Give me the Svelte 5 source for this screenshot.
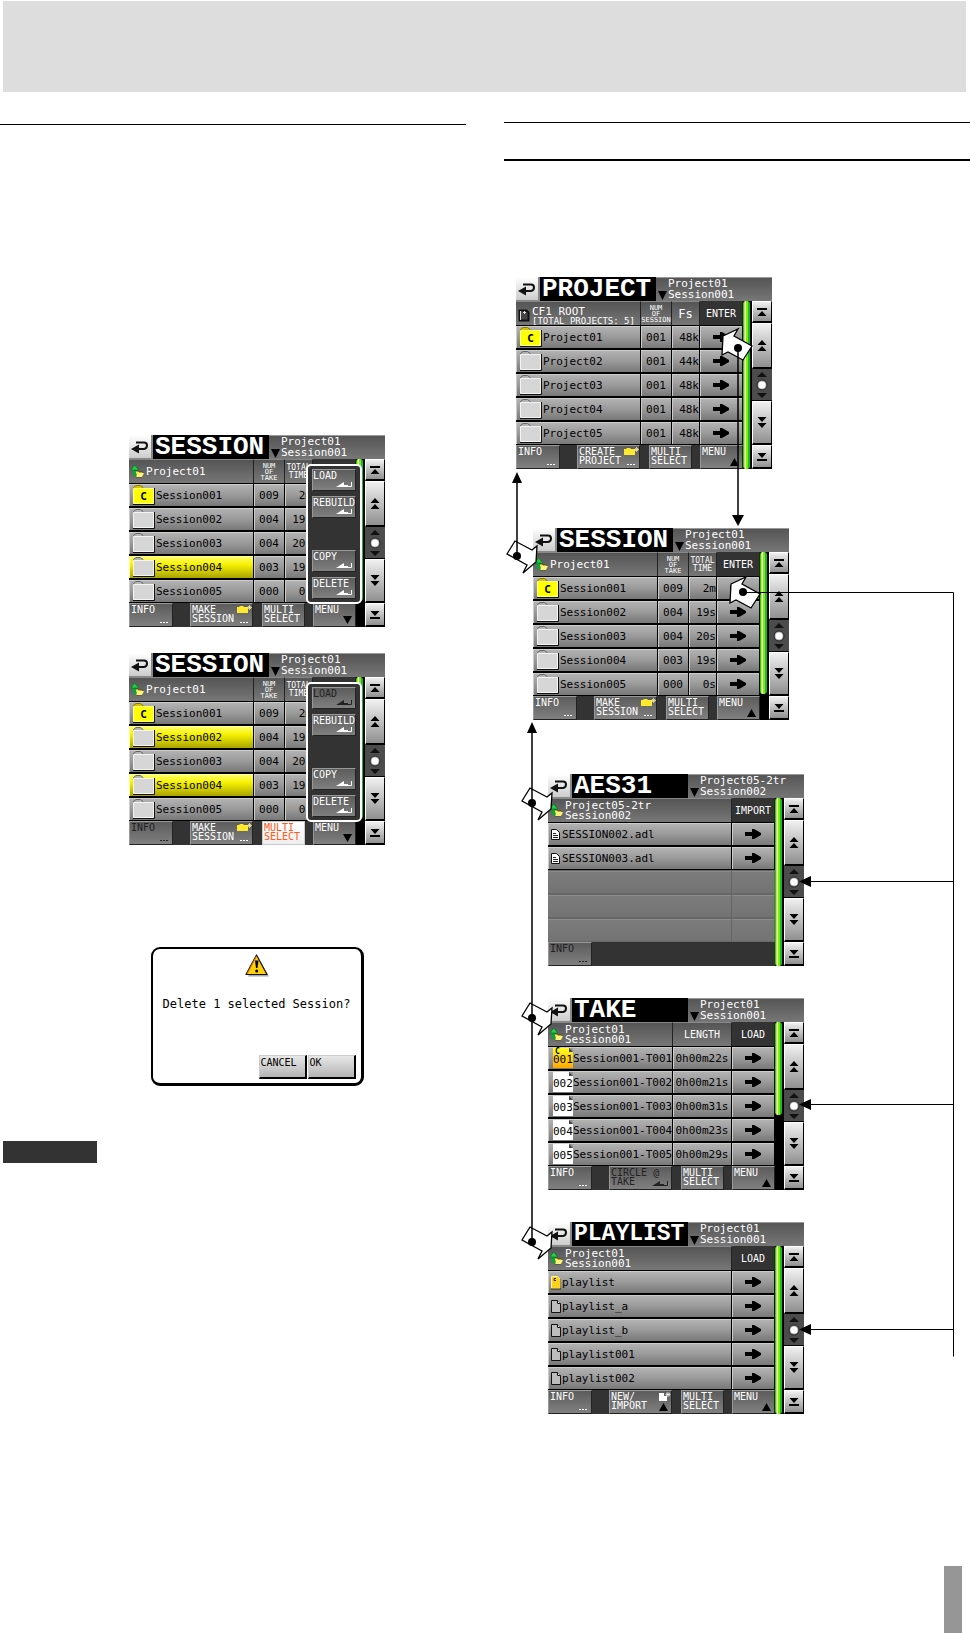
<script>
  const sessions = [
    ['Session001', '009', '2m'],
    ['Session002', '004', '19s'],
    ['Session003', '004', '20s'],
    ['Session004', '003', '19s'],
    ['Session005', '000', '0s']
  ];
  const sessionCols = [
    { label: ['NUM', 'OF', 'TAKE'], size: 'tiny', width: 31 },
    { label: ['TOTAL', 'TIME'], size: 'small', width: 28 },
    { label: ['ENTER'], dark: true, width: 43 }
  ];
  const info = { slot: 1, lines: ['INFO'], mark: 'dots' };
  const multi = { slot: 3, lines: ['MULTI', 'SELECT'] };
  const menuUp = { slot: 4, lines: ['MENU'], mark: 'up' };
  const menuDown = { slot: 4, lines: ['MENU'], mark: 'down' };
  const makeSession = { slot: 2, lines: ['MAKE', 'SESSION'], mark: 'dots', badge: 'folder' };

  function sessionRows(selected = []) {
    return sessions.map((s, i) => ({
      icon: i === 0 ? 'current' : 'folder',
      name: s[0],
      selected: selected.includes(s[0]),
      cells: [s[1], s[2], '>']
    }));
  }

  const sessionScreen = {
    title: 'SESSION', path: ['Project01', 'Session001'], crumb: ['Project01'], up: true,
    cols: sessionCols, rows: sessionRows(), bar: 142,
    actions: [info, makeSession, multi, menuUp]
  };
  const leftOne = {
    ...sessionScreen, rows: sessionRows(['Session004']),
    actions: [info, makeSession, multi, menuDown],
    menu: [['LOAD'], ['REBUILD'], null, ['COPY'], ['DELETE']]
  };
  const leftTwo = {
    ...sessionScreen, rows: sessionRows(['Session002', 'Session004']),
    actions: [{ ...info, off: true }, makeSession, { ...multi, lit: true }, menuDown],
    menu: [['LOAD', true], ['REBUILD'], null, ['COPY'], ['DELETE']]
  };
  const projectScreen = {
    title: 'PROJECT', path: ['Project01', 'Session001'], root: true,
    cols: [
      { label: ['NUM', 'OF', 'SESSION'], size: 'tiny', width: 31 },
      { label: ['Fs'], size: 'big', width: 28 },
      { label: ['ENTER'], dark: true, width: 43 }
    ],
    rows: [1, 2, 3, 4, 5].map((n) => ({
      icon: n === 1 ? 'current' : 'folder', name: 'Project0' + n,
      cells: ['001', n === 2 ? '44k' : '48k', '>']
    })),
    bar: 168,
    actions: [info, { slot: 2, lines: ['CREATE', 'PROJECT'], mark: 'dots', badge: 'folder' }, multi, menuUp]
  };
  const aesScreen = {
    title: 'AES31', path: ['Project05-2tr', 'Session002'], crumb: ['Project05-2tr', 'Session002'], up: true,
    cols: [{ label: ['IMPORT'], dark: true, width: 43 }],
    rows: [
      { icon: 'text', name: 'SESSION002.adl', cells: ['>'] },
      { icon: 'text', name: 'SESSION003.adl', cells: ['>'] },
      { empty: true, cells: [''] }, { empty: true, cells: [''] }, { empty: true, cells: [''] }
    ],
    bar: 168, actions: [{ ...info, off: true }]
  };
  const takeScreen = {
    title: 'TAKE', path: ['Project01', 'Session001'], crumb: ['Project01', 'Session001'], up: true,
    cols: [{ label: ['LENGTH'], width: 59 }, { label: ['LOAD'], dark: true, width: 43 }],
    rows: [22, 21, 31, 23, 29].map((sec, i) => ({
      icon: 'take', tag: '00' + (i + 1), current: i === 0,
      name: 'Session001-T00' + (i + 1), cells: ['0h00m' + sec + 's', '>']
    })),
    bar: 93,
    actions: [info, { slot: 2, lines: ['CIRCLE @', 'TAKE'], mark: 'enter', off: true }, multi, menuUp]
  };
  const playlistScreen = {
    title: 'PLAYLIST', narrow: true, path: ['Project01', 'Session001'], crumb: ['Project01', 'Session001'], up: true,
    cols: [{ label: ['LOAD'], dark: true, width: 43 }],
    rows: ['playlist', 'playlist_a', 'playlist_b', 'playlist001', 'playlist002'].map((name, i) => ({
      icon: i === 0 ? 'pageCurrent' : 'page', name, cells: ['>']
    })),
    bar: 168,
    actions: [info, { slot: 2, lines: ['NEW/', 'IMPORT'], mark: 'up', badge: 'page' }, multi, menuUp]
  };

  const hints = [[517, 556], [532, 803], [532, 1018], [532, 1242]];
  const targets = [[735, 344], [743, 592]];
  const dots = [...hints, [738, 348], [743, 592]];
</script>

{#snippet rowIcon(row)}
  {#if row.icon === 'current' || row.icon === 'folder'}
    {@const on = row.icon === 'current'}
    <svg class="i-folder" width="24" height="22" viewBox="0 0 24 22">
      <path d="M1.500 5V3.500L4 1.500h4.500L11 3.500V5z" fill={on ? '#d8c000' : '#b4b4b4'} stroke={on ? '#8a7a00' : '#6a6a6a'} />
      <path d="M1.500 4.500h20v15h-20z" fill={on ? '#ff0' : '#d6d6d6'} stroke={on ? '#ffff90' : '#f4f4f4'} />
      <path d="M1 20.500h21.500V4" fill="none" stroke="#111" />
      {#if on}<text x="11.500" y="16" text-anchor="middle" font-size="11" font-weight="700">C</text>{/if}
    </svg>
  {:else if row.icon === 'take'}
    <span class="tag" class:current={row.current}>
      <i></i>{#if row.current}<b>C</b>{/if}{row.tag}
    </span>
  {:else if row.icon === 'text'}
    <svg class="i-page" width="11" height="13" viewBox="0 0 11 13">
      <path d="M1.500 1.500h5l3 3v7h-8z" fill="#fff" stroke="#111" />
      <path d="M3 5.500h3M3 7.500h5M3 9.500h5" stroke="#222" />
    </svg>
  {:else}
    {@const on = row.icon === 'pageCurrent'}
    <svg class="i-page" width="11" height="15" viewBox="0 0 11 15">
      <path d="M1.500 1.500h6l3 3v9h-9z" fill={on ? '#ffd21a' : '#bdbdbd'} stroke={on ? '#fff3a0' : '#111'} />
      {#if on}<path d="M1 14h10V4M6 3.500H4v2h2" fill="none" stroke="#332800" />{:else}<path d="M7.500 1.500v3h3" fill="#fff" stroke="#111" />{/if}
    </svg>
  {/if}
{/snippet}

{#snippet mark(kind)}
  {#if kind === 'dots'}
    <svg class="mark" width="9" height="3" viewBox="0 0 9 3"><path d="M0 1h2v1H0zM3 1h2v1H3zM6 1h2v1H6z" fill="currentColor" /></svg>
  {:else if kind === 'up'}
    <svg class="mark" width="9" height="8" viewBox="0 0 9 8"><path d="M4.500 0 9 8H0z" fill="#000" /></svg>
  {:else if kind === 'down'}
    <svg class="mark" width="9" height="8" viewBox="0 0 9 8"><path d="M0 0h9L4.500 8z" fill="#000" /></svg>
  {:else if kind === 'enter'}
    <svg class="mark" width="16" height="6" viewBox="0 0 16 6"><path d="M0 5 8 0v3h4v2z" fill="currentColor" /><path d="M12 4.500h3.500V0" fill="none" stroke="currentColor" /></svg>
  {/if}
{/snippet}

{#snippet screen(s)}
  <article class="screen" aria-label={s.title}>
    <header class="top">
      <button class="back" aria-label="Back">
        <svg width="18" height="14" viewBox="0 0 18 14">
          <path d="M5 2.500h8q3 0 3 3t-3 3.500H8" fill="none" stroke="#111" stroke-width="2" />
          <path d="M0 9l8-4.500v9z" fill="#111" />
        </svg>
      </button>
      <h3 class:narrow={s.narrow}>{s.title}</h3>
      <button class="path">
        <svg width="9" height="9" viewBox="0 0 9 9"><path d="M0 0h9L4.500 9z" fill="#000" /></svg>
        <span>{s.path[0]}<br />{s.path[1]}</span>
      </button>
    </header>
    <div class="body">
      <div class="main">
        <table>
          <thead>
            <tr>
              <th class="crumb">
                <div class:root={s.root}>
                  {#if s.root}
                    <svg width="12" height="13" viewBox="0 0 12 13"><path d="M1.500 1.500h7l2 2v8h-9z" fill="#444" stroke="#111" stroke-width="2" /><path d="M2.500 2v9M5 3.500h3M6.500 2v3" stroke="#ddd" /></svg>
                    <span>CF1 ROOT<small>[TOTAL PROJECTS: 5]</small></span>
                  {:else}
                    <svg width="13" height="13" viewBox="0 0 13 13">
                      <path d="M4 6h3l1 1h4l-1 5H5z" fill="#f5e050" stroke="#443a00" stroke-width=".7" />
                      <path d="M5 12l2-4h6l-2 4z" fill="#fff27a" />
                      <path d="M5.500 10.500Q3 10 3 5" fill="none" stroke="#0a3" stroke-width="3" />
                      <path d="M3.500 0 8 5H0z" fill="#1fd23a" stroke="#063" stroke-width=".6" />
                    </svg>
                    <span>{#each s.crumb as c, i}{#if i}<br />{/if}{c}{/each}</span>
                  {/if}
                </div>
              </th>
              {#each s.cols as c}
                <th class={c.size ?? ''} class:dark={c.dark} style:width="{c.width}px">
                  {#each c.label as l, i}{#if i}<br />{/if}{l}{/each}
                </th>
              {/each}
            </tr>
          </thead>
          <tbody>
            {#each s.rows as row}
              <tr class:empty={row.empty}>
                <td class:selected={row.selected}>
                  {#if !row.empty}<div class="name">{@render rowIcon(row)}<span class="text">{row.name}</span></div>{/if}
                </td>
                {#each row.cells as cell}
                  <td class="val" class:time={/\d[smk]$/.test(cell) && cell.length < 4}>
                    {#if cell === '>'}
                      <button class="go" aria-label="Open {row.name}">
                        <svg width="16" height="10" viewBox="0 0 16 10"><path d="M0 3h7V0h2l7 4v2l-7 4H7V7H0z" fill="#000" /></svg>
                      </button>
                    {:else}<span class="text">{cell}</span>{/if}
                  </td>
                {/each}
              </tr>
            {/each}
          </tbody>
        </table>
        <footer class="actions">
          {#each s.actions as a}
            <button class="key slot{a.slot}" class:off={a.off} class:lit={a.lit}>
              <span>{#each a.lines as l, i}{#if i}<br />{/if}{l}{/each}</span>
              {#if a.badge === 'folder'}
                <svg class="badge" width="15" height="8" viewBox="0 0 15 8"><path d="M0 2h2l1-1h3l1 1h4v6H0z" fill="#ffe92e" /><path d="M12.500 0v5M10 2.500h5M11 1l3 3M14 1l-3 3" stroke="#fff6a0" stroke-width=".7" /></svg>
              {:else if a.badge === 'page'}
                <svg class="badge" width="12" height="9" viewBox="0 0 12 9"><path d="M0 1h5v3h3v5H0z" fill="#fff" /><path d="M9 0v5M6.500 2.500h5M7 1l4 3M11 1l-4 3" stroke="#fff" stroke-width=".7" /></svg>
              {/if}
              {@render mark(a.mark)}
            </button>
          {/each}
        </footer>
      </div>
      <div class="track"><div class="thumb" style:height="{s.bar}px"></div></div>
      <nav>
        <button aria-label="First"><svg width="10" height="8" viewBox="0 0 10 8"><path d="M0 0h10v2H0zM5 3l4.500 5h-9z" /></svg></button>
        <button aria-label="Page up"><svg width="10" height="11" viewBox="0 0 10 11"><path d="M5 0l4.500 5h-9zM5 6l4.500 5h-9z" /></svg></button>
        <div class="wheel"><svg width="18" height="28" viewBox="0 0 18 28"><path d="M9 1l5 5H4zM9 27l5-5H4z" fill="#111" /><circle cx="9" cy="14" r="5" fill="#aaa" stroke="#222" /><circle cx="9" cy="14" r="3.500" fill="#fff" /></svg></div>
        <button aria-label="Page down"><svg width="10" height="11" viewBox="0 0 10 11"><path d="M5 5l4.500-5h-9zM5 11l4.500-5h-9z" /></svg></button>
        <button aria-label="Last"><svg width="10" height="8" viewBox="0 0 10 8"><path d="M0 6h10v2H0zM5 5L9.500 0h-9z" /></svg></button>
      </nav>
    </div>
    {#if s.menu}
      <div class="popup">
        {#each s.menu as m}
          {#if m}<button class="key" class:off={m[1]}><span>{m[0]}</span>{@render mark('enter')}</button>{:else}<span></span>{/if}
        {/each}
      </div>
    {/if}
  </article>
{/snippet}

<div class="page">
  <div class="banner"></div>
  <main>
    <section class="left">
      <div class="stack">
        {@render screen(leftOne)}
        {@render screen(leftTwo)}
        <div class="dialog" role="alertdialog" aria-labelledby="ask">
          <svg width="24" height="23" viewBox="0 0 24 23">
            <path d="M13 3 24 22.500H3z" fill="#aaa" />
            <path d="M11.500 1 22 20.500H1z" fill="#ffcf0a" stroke="#111" stroke-width="1.200" stroke-linejoin="round" />
            <path d="M11.500 2 2 20" stroke="#e07000" />
            <path d="M10 6.500h3.500l-1 7.500h-1.500z" fill="#000" /><circle cx="11.700" cy="17" r="1.500" />
          </svg>
          <p id="ask">Delete 1 selected Session?</p>
          <div class="choices"><button>CANCEL</button><button>OK</button></div>
        </div>
      </div>
      <div class="label"></div>
    </section>
    <section class="right">
      <div class="heading"></div>
      <div class="diagram">
        <div class="l1">{@render screen(projectScreen)}</div>
        <div class="l2">{@render screen(sessionScreen)}</div>
        <div class="l3">{@render screen(aesScreen)}</div>
        <div class="l3">{@render screen(takeScreen)}</div>
        <div class="l3">{@render screen(playlistScreen)}</div>
        <svg class="wires" width="466" height="1140" viewBox="504 277 466 1140">
          {#each hints as [x, y]}
            <path transform="translate({x} {y})" d="M-2-15-10-2 10 9 6 17 19 6 20-10 15-6z" fill="#fff" stroke="#000" stroke-width="1.300" />
          {/each}
          {#each targets as [x, y]}
            <path transform="translate({x} {y})" d="M-12-8 3-15-1-8 17 2 8 16-7 8-13 11z" fill="#fff" stroke="#000" stroke-width="1.300" />
          {/each}
          {#each dots as [x, y]}<circle cx={x} cy={y} r="4" />{/each}
          <path d="M738 348V516M517 556V482M532 1242V732" fill="none" stroke="#000" stroke-width="1.500" />
          <path d="M743 592.500H953.500V1356.500M953.500 881.500H810M953.500 1104.500H810M953.500 1329.500H810" fill="none" stroke="#000" />
          <path d="M738 526l-6-11h12zM517 472l-5 11h10zM532 722l-5 11h10zM799 881.500l12-5.500v11zM799 1104.500l12-5.500v11zM799 1329.500l12-5.500v11z" />
        </svg>
      </div>
    </section>
  </main>
  <div class="thumbtab"></div>
</div>

<style>
  :global(body) { margin: 0; background: #fff; }
  .page { display: flex; flex-direction: column; font-family: 'DejaVu Sans Mono', 'Liberation Mono', monospace; font-size: 11px; color: #000; }
  .banner { height: 91px; margin: 1px 4px 0 3px; background: #ddd; }
  main { display: grid; grid-template-columns: 1fr 1fr; gap: 38px; }
  .left { padding-top: 32px; }
  .stack { border-top: 1px solid #000; padding: 310px 0 0 48px; display: flex; flex-direction: column; align-items: center; gap: 26px; }
  .label { width: 94px; height: 22px; margin: 55px 0 0 3px; background: #333; }
  .right { padding-top: 30px; }
  .heading { height: 36px; border-top: 1px solid #000; border-bottom: 2px solid #000; }
  .diagram { position: relative; margin-top: 116px; }
  .l1 { margin: 0 0 59px 12px; }
  .l2 { margin: 0 0 54px 29px; }
  .l3 { margin: 0 0 32px 44px; }
  .wires { position: absolute; left: 0; top: 0; pointer-events: none; }
  .thumbtab { align-self: flex-end; width: 18px; height: 67px; margin: 120px 8px 0 0; background: #969696; }

  button { font: inherit; color: inherit; margin: 0; padding: 0; border: 0; border-radius: 0; background: none; text-align: left; }
  svg { display: block; flex: none; }

  .screen { position: relative; width: 256px; background: #000; }
  .top { display: grid; grid-template-columns: 24px 116px 1fr; height: 23px; }
  .back { display: grid; place-items: center; background: linear-gradient(#fff, #ccc); border-right: 2px solid #888; border-bottom: 1px solid #888; }
  h3 { margin: 0; padding-left: 2px; color: #fff; font: 700 26px/24px 'Liberation Mono', monospace; white-space: nowrap; }
  h3.narrow { font-size: 23px; }
  .path { display: flex; align-items: flex-end; gap: 1px; padding: 0 0 1px 2px; color: #fff; background: linear-gradient(#555, #777); border-top: 1px solid #999; line-height: 11px; white-space: nowrap; }
  .body { display: grid; grid-template-columns: 227px 9px 20px; padding-top: 1px; }

  table { width: 100%; table-layout: fixed; border-collapse: separate; border-spacing: 0; }
  th, td { box-sizing: border-box; height: 24px; padding: 0; white-space: nowrap; }
  th { color: #fff; font-weight: 400; font-size: 10px; line-height: 10px; background: linear-gradient(#555, #777); border-right: 1px solid #222; border-top: 1px solid #888; }
  th.dark { background: #333; border-top-color: #333; }
  th.tiny { font-size: 7px; line-height: 6px; }
  th.small { font-size: 8px; line-height: 8px; }
  th.big { font-size: 12px; }
  .crumb div { display: flex; align-items: center; gap: 2px; padding-left: 2px; font-size: 11px; line-height: 10px; text-align: left; }
  .crumb .root { padding-top: 4px; }
  small { display: block; font-size: 9px; line-height: 8px; }
  td { background: linear-gradient(#b4b4b4, #9a9a9a 50%, #787878); border-style: solid; border-width: 1px 1px 1px 0; border-color: #000; box-shadow: inset 1px 1px #ccc; line-height: 12px; }
  td.selected { background: linear-gradient(#ffff70, #f6f000 40%, #a8a400); box-shadow: inset 1px 1px #ffffa0; }
  .empty td { background: linear-gradient(#7c7c7c, #737373); border-color: #666; box-shadow: inset 0 1px #8c8c8c; }
  .name { display: flex; align-items: center; height: 22px; padding-left: 1px; }
  .text { display: inline-block; padding-top: 2px; }
  .i-folder { margin-left: 2px; font-family: 'DejaVu Sans Mono', monospace; }
  .i-page { margin-left: 1px; margin-right: 1px; }
  .val { text-align: center; }
  .val.time { text-align: right; }
  .go { display: grid; place-items: center; width: 100%; }
  .tag { position: relative; box-sizing: border-box; width: 21px; height: 20px; margin: 0 0 0 4px; padding-top: 5px; background: #fff; line-height: 14px; font-size: 11px; }
  .tag.current { background: linear-gradient(#ffff20, #ffa800); }
  .tag i { position: absolute; right: 0; top: 0; border: 2px solid #999; border-left-color: #444; border-bottom-color: #444; }
  .tag b { position: absolute; left: 2px; top: 0; font-size: 8px; line-height: 8px; }

  .actions { display: grid; grid-template-columns: 44px 17px 63px 9px 43px 8px 43px; height: 24px; background: #333; }
  .key { position: relative; display: flex; align-items: flex-start; padding: 1px 0 0 1px; color: #fff; background: linear-gradient(#5c5c5c, #808080); border: 1px solid #222; border-top-color: #999; border-left-color: #999; font-size: 10px; line-height: 9px; white-space: nowrap; }
  .popup .key { padding-left: 0; }
  .key.off { color: #222; }
  .key.lit { color: #ff5a1a; background: linear-gradient(#fff, #eee); border-color: #ccc; }
  .slot1 { grid-column: 1; }
  .slot2 { grid-column: 3; }
  .slot3 { grid-column: 5; }
  .slot4 { grid-column: 7; }
  .mark { position: absolute; right: 3px; bottom: 2px; }
  .badge { position: absolute; right: 0; top: 1px; }

  .thumb { width: 7px; border-radius: 3px; background: linear-gradient(90deg, #3fbf10 0 1px, #9dff20 1px 2px, #fff 2px 3px, #80f000 3px 5px, #18b838 5px); }
  nav { display: grid; grid-template-rows: 22px 46px 32px 44px 24px; }
  nav button { display: grid; place-items: center; background: linear-gradient(#f0f0f0, #909090); border: 1px solid #fff; border-right-color: #000; border-bottom: 2px solid #000; }
  .wheel { display: grid; place-items: center; background: #4c4c4c; border-bottom: 1px solid #000; }

  .popup { position: absolute; left: 177px; top: 29px; display: grid; grid-template-rows: repeat(5, 22px); grid-template-columns: 44px; gap: 5px; padding: 3px 4px; border: 2px solid #fff; border-radius: 5px; background: #333; }

  .dialog { box-sizing: border-box; width: 213px; margin-top: 76px; padding: 5px 5px 4px; border: 2px solid #000; border-right-width: 3px; border-bottom-width: 3px; border-radius: 9px; display: flex; flex-direction: column; align-items: center; }
  .dialog p { margin: 19px 0 43px; font-size: 12px; line-height: 16px; white-space: nowrap; }
  .choices { align-self: flex-end; display: flex; gap: 1px; }
  .choices button { display: flex; align-items: flex-start; width: 48px; height: 24px; padding: 1px; font-size: 10px; line-height: 12px; background: linear-gradient(#e8e8e8, #b4b4b4); border: 1px solid #ccc; border-right: 2px solid #000; border-bottom: 2px solid #000; }
</style>
